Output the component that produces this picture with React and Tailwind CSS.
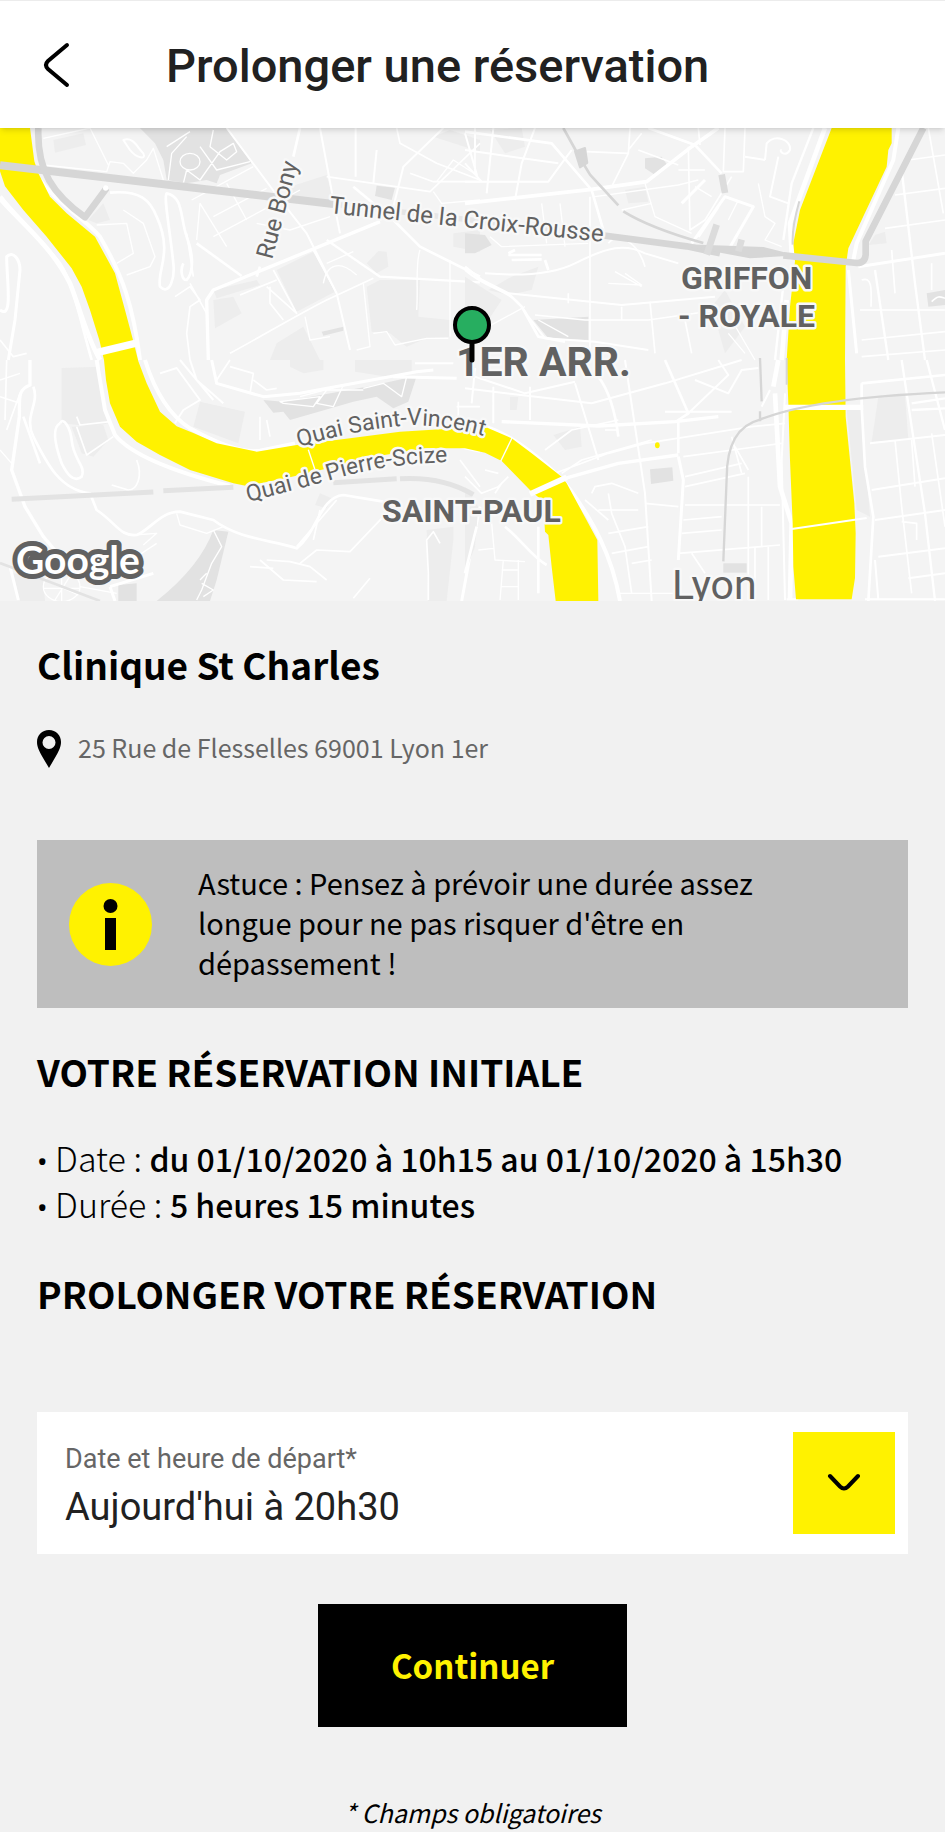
import { useState } from 'react'

const DEPARTURES = ["Aujourd'hui à 20h30", "Aujourd'hui à 21h00", "Aujourd'hui à 21h30"]

export default function App() {
  const [departure, setDeparture] = useState(DEPARTURES[0])

  return (
    <div className="min-h-screen bg-[#f1f1f1] font-['Noto_Sans_CJK_SC',sans-serif] text-black">
      <Header title="Prolonger une réservation" />
      <CityMap />

      <main className="px-[37px] pt-[33px]">
        <h2 className="text-[37px] leading-[60px] font-bold">Clinique St Charles</h2>
        <p className="mt-[33px] flex items-center gap-[17px] text-[25px] leading-[40px] text-[#666]">
          <PinIcon />
          <span className="pb-1">25 Rue de Flesselles 69001 Lyon 1er</span>
        </p>

        {/* Tip */}
        <div className="mt-[69px] flex items-center gap-[46px] bg-[#bebebe] py-[22px] pr-24 pl-8">
          <InfoIcon />
          <p className="pb-1 text-[29px] leading-[40px]">
            Astuce : Pensez à prévoir une durée assez longue pour ne pas risquer d'être en dépassement !
          </p>
        </div>

        {/* Initial booking */}
        <h3 className="mt-[33px] text-[37px] leading-[60px] font-bold">VOTRE RÉSERVATION INITIALE</h3>
        <ul className="mt-[34px] text-[34px] leading-[46px] font-light">
          <BookingLine label="Date" value="du 01/10/2020 à 10h15 au 01/10/2020 à 15h30" />
          <BookingLine label="Durée" value="5 heures 15 minutes" />
        </ul>

        {/* Extension form */}
        <h3 className="mt-9 text-[37px] leading-[60px] font-bold">PROLONGER VOTRE RÉSERVATION</h3>
        <form onSubmit={(e) => e.preventDefault()}>
          <div className="mt-[89px] flex items-center bg-white py-5 pr-[13px] pl-7 font-[Roboto,sans-serif]">
            <div className="flex-1">
              <label htmlFor="departure" className="block text-[27px] leading-[48px] text-[#666]">
                Date et heure de départ*
              </label>
              <select
                id="departure"
                value={departure}
                onChange={(e) => setDeparture(e.target.value)}
                className="block h-12 w-full appearance-none bg-transparent text-[38px] leading-[48px] text-[#212121] focus:outline-none"
              >
                {DEPARTURES.map((d) => <option key={d}>{d}</option>)}
              </select>
            </div>
            <span className="flex size-[102px] items-center justify-center bg-[#fff200]">
              <svg viewBox="0 0 34 20" className="h-5 w-[34px]" fill="none" stroke="#000" strokeWidth="4" strokeLinecap="round">
                <path d="M3 3 L13 13.500 Q17 17.500 21 13.500 L31 3" />
              </svg>
            </span>
          </div>

          <button type="submit" className="mx-auto mt-[50px] block h-[123px] w-[309px] bg-black text-[33px] font-bold text-[#fff200]">
            Continuer
          </button>
        </form>

        <p className="mt-[68px] text-center text-[25px] leading-[34px] italic">* Champs obligatoires</p>
      </main>
    </div>
  )
}

function Header({ title }) {
  return (
    <header className="relative flex h-32 items-center gap-[94px] border-t border-[#ececec] bg-white pl-10 font-[Roboto,sans-serif] shadow-md">
      <button type="button" aria-label="Retour">
        <svg viewBox="0 0 32 48" className="h-12 w-8" fill="none" stroke="#000" strokeWidth="4" strokeLinecap="round">
          <path d="M27 4 L8 20 Q4 24 8 28 L27 44" />
        </svg>
      </button>
      <h1 className="pt-0.5 text-[47px] leading-[60px] font-medium text-[#212121]">{title}</h1>
    </header>
  )
}

function BookingLine({ label, value }) {
  return (
    <li className="h-[46px]">
      <span className="font-['Noto_Sans',sans-serif] text-[28px] font-normal">•</span> {label} :{' '}
      <span className="text-[32px] font-medium">{value}</span>
    </li>
  )
}

function PinIcon() {
  return (
    <svg viewBox="0 0 24 38" className="h-[38px] w-6" aria-hidden="true">
      <path fillRule="evenodd" d="M12 0 C5 0 0 5 0 12 C0 18 3 23 12 38 C21 23 24 18 24 12 C24 5 19 0 12 0 Z M12 6 A6.500 6.500 0 1 1 12 19 A6.500 6.500 0 1 1 12 6 Z" />
    </svg>
  )
}

function InfoIcon() {
  return (
    <svg viewBox="0 0 83 83" className="size-[83px] shrink-0" aria-hidden="true">
      <circle cx="41.500" cy="41.500" r="41.500" fill="#fff200" />
      <circle cx="41.500" cy="23" r="7" />
      <rect x="36" y="35" width="11" height="32" />
    </svg>
  )
}

// Map tiles are drawn at three times their display size.
const TILES = [
  {
    origin: 'translate(0 -24)',
    blocks: [
      'M160 60 L250 40 L258 75 L165 98 Z',
      'M870 200 L980 165 L1000 240 L870 240 Z',
      'M830 450 L940 395 L1005 515 L890 575 Z',
      'M640 540 L700 530 L725 580 L645 625 Z',
      'M1100 500 L1140 480 L1260 480 L1255 590 L1350 600 L1350 650 L1280 655 L1220 680 L1170 640 L1115 635 Z',
      'M830 670 L910 620 L960 720 H810 Z',
      'M1100 430 L1135 393 L1160 395 L1165 440 L1130 460 Z',
      'M1360 340 L1440 330 V395 L1360 380 Z',
      'M1300 50 L1350 30 L1440 60 V95 Z',
      'M640 510 L770 480 L780 495 L650 535 Z',
      'M265 300 L310 250 L330 300 L290 310 Z',
    ],
    parks: [
      'M420 24 H680 L755 130 L660 165 L650 190 L620 180 L560 190 L500 180 L490 120 L465 70 Z',
      'M1130 197 L1185 203 L1175 240 L1125 228 Z',
      'M965 635 L1030 620 V632 L970 647 Z',
    ],
    roads: [
      [14, 'M0 230 C60 310 150 370 210 490 C245 580 260 650 300 720'],
      [12, 'M120 180 C170 250 260 300 300 350 C370 470 400 560 420 720'],
      [8, 'M0 240 C70 320 120 350 180 430 C220 490 240 600 275 720'],
      [10, 'M625 720 L620 540 L640 510 L1140 305'],
      [9, 'M0 570 C40 600 20 480 20 410 C40 390 60 420 60 450 L45 600 L25 720'],
      [8, 'M330 218 C420 210 450 240 470 290 C520 400 470 450 480 500 C510 530 525 470 520 430 C510 330 490 230 500 220 C550 230 540 290 560 350 C590 430 570 470 560 480 C545 480 540 450 550 430'],
      [5, 'M560 340 L580 470'],
      [8, 'M590 370 L725 468'],
      [8, 'M900 24 L880 110 M780 440 L770 470'],
      [6, 'M680 24 L830 225 L920 340 L1010 520 L1050 690'],
      [7, 'M980 360 L1140 470 L1440 487'],
      [8, 'M1060 200 L1180 300 L1260 380 L1440 470'],
      [5, 'M690 700 C800 640 900 580 980 540 L1120 475'],
      [6, 'M960 24 L1000 240 L1020 340'],
      [5, 'M980 170 L1290 215 L1440 70'],
      [6, 'M1067 24 V170 M1130 90 L1120 190'],
      [6, 'M1330 24 L1210 140 L1180 260'],
      [5, 'M1190 24 L1200 70 L1310 130 L1440 180 M1230 160 L1300 185 H1440'],
      [4, 'M1310 185 L1360 120 L1430 165 M1300 215 L1325 250 L1440 240'],
      [4, 'M130 135 L320 155 L330 125 L370 130 L400 160 L440 120 L460 85 L490 180 M130 55 L270 24 L325 135'],
      [6, 'M370 60 C400 50 410 80 430 100 C440 120 410 115 390 90 Z'],
      [4, 'M500 80 L570 35 M505 180 L515 100 L560 50 M550 190 L560 150 L600 180 L660 95 L700 70 L710 95 L680 120 L630 80 L640 30 M540 125 a30 25 0 1 1 60 0 a30 25 0 1 1 -60 0 M600 80 L650 150 L750 125'],
      [4, 'M575 240 L760 140 M640 290 L800 205 M680 190 L740 300 M590 360 L600 250 L680 380 M640 350 L900 210 M770 310 L870 330 L990 290'],
      [5, 'M720 525 L830 480 M800 500 L890 580 L820 450 M810 500 V550 L850 600 M940 390 L1010 520'],
      [4, 'M970 490 C980 430 1020 420 1070 465 M980 430 L1060 395 M915 590 L930 660 L990 650 M1090 490 L1110 680 L1070 690'],
      [4, 'M1120 640 L1160 635 L1185 675 L1280 655 H1345 M1350 420 V650 M1260 390 C1245 430 1255 510 1250 570'],
      [4, 'M290 315 L380 310 L400 400 L350 430 M380 465 L450 440 L465 410 L430 310 L370 270'],
      [5, 'M525 530 L570 500 L600 540 L570 560 L560 640 L570 720 M570 490 L620 580 M0 660 L40 710 L80 700'],
      [5, 'M1420 490 V560 M1425 24 V160'],
    ],
  },
  {
    origin: 'translate(1395 -24)',
    blocks: [
      'M75 30 L170 24 L180 80 L120 100 Z',
      'M480 210 L540 200 L550 245 L490 250 Z',
      'M70 510 L140 470 L220 440 L200 510 L130 525 Z',
      'M740 560 L780 510 L840 620 L780 700 Z',
      'M1230 345 L1260 335 L1265 370 L1210 375 Z',
      'M0 470 L110 540 L70 600 L0 560 Z',
    ],
    parks: [
      'M540 115 L590 110 L610 140 L570 165 L540 145 Z',
      'M205 600 L370 590 V660 L250 655 Z',
      'M0 340 L60 345 L80 375 L30 400 H0 Z',
      'M1385 520 L1440 510 V555 L1390 560 Z',
    ],
    roads: [
      [11, 'M0 250 L380 208 L545 185 L680 80 L760 24'],
      [8, 'M0 35 L260 70 L380 210 L415 330'],
      [6, 'M0 90 L280 130 M0 185 H250 L290 130 L320 90 M65 220 L85 24 M150 240 L170 130 L210 24'],
      [6, 'M30 24 V90 M0 130 L50 185 M0 40 L40 180'],
      [5, 'M365 95 L490 100 L495 24 M490 100 L440 200 M490 90 L530 40 M520 90 L640 135'],
      [8, 'M550 24 L690 75 L770 160'],
      [5, 'M700 24 L705 75 M780 24 L775 155 H835 L840 24 M670 80 L675 330 L720 300 L800 170 M640 150 L720 150'],
      [6, 'M900 120 L905 70 C930 40 980 60 975 90 C960 115 940 90 950 90 M840 110 L900 120 M940 110 L915 230 L970 250'],
      [9, 'M680 370 L780 230 L865 260 L790 390 M700 350 L760 260 M650 250 L720 180'],
      [4, 'M540 190 L570 290 L680 340 M470 270 L560 250 M390 230 L640 195 L700 180 M230 250 L245 370 M285 250 L300 380'],
      [6, 'M0 450 C80 520 140 500 190 590 L240 655 L390 665 L550 690'],
      [8, 'M0 440 L50 480 L130 520 L170 560 L220 650 L300 665'],
      [6, 'M60 460 C180 470 270 460 330 430 C430 380 480 370 540 400 L640 430 M130 520 L470 555 L750 530'],
      [5, 'M210 585 L360 600 L550 600 L760 570 M375 230 V720 M430 370 C460 330 520 370 540 440 M310 520 V550 M470 560 V600 M555 545 L570 700 M660 600 L680 700'],
      [8, 'M130 405 H230 M140 420 L230 418 M130 400 L150 390 M240 420 L250 450'],
      [4, 'M430 490 L530 495 L480 460 M450 455 L530 500 M75 350 L110 380 L370 370 M70 620 L180 560 M220 600 L310 650 M800 600 L870 720 M790 640 L840 700'],
      [14, 'M1080 24 L975 310 L980 400 M965 540 L950 720'],
      [7, 'M1045 24 L980 190 L955 360 M960 450 L930 720'],
      [12, 'M1300 24 L1285 120 L1175 370 L1165 420'],
      [9, 'M1180 440 L1440 400 M1150 450 L1175 700'],
      [5, 'M1330 120 L1440 105 M1290 225 L1440 205 M1260 325 L1440 300 M1190 480 C1220 470 1220 500 1218 560 M1185 570 L1440 570 M1190 660 L1440 635 M1190 710 L1440 690'],
      [7, 'M1310 150 L1350 490 L1380 720 M1230 450 L1270 720'],
      [5, 'M1390 24 L1435 280 M1280 390 L1290 520 M1400 430 V510 M1400 545 C1420 525 1425 530 1440 535'],
      [4, 'M880 190 L900 290 L930 310 L900 360 L950 380 M690 200 L740 230 M820 240 L790 300'],
    ],
  },
  {
    origin: 'translate(0 696)',
    blocks: [
      'M185 24 L300 20 L325 190 L280 200 L185 190 Z',
      'M600 125 L735 155 L715 250 L580 200 Z',
      'M870 0 H970 V30 L910 40 L870 20 Z',
      'M1065 0 H1235 V40 L1160 50 L1065 35 Z',
      'M215 200 L310 195 L325 240 L280 290 L245 280 Z',
      'M1280 510 L1360 500 V540 L1340 723 H1285 Z',
      'M960 400 L995 415 L980 445 L945 435 Z',
      'M40 640 L130 650 L135 723 H60 Z',
    ],
    parks: [
      'M790 120 L850 125 L1100 80 L1250 48 L1225 125 L1180 145 L1130 110 L1060 125 L870 180 L850 155 L820 158 Z',
      'M640 510 L685 515 L650 660 L630 723 H470 Q600 620 640 510 Z',
      'M355 675 L410 670 V723 H355 Z',
    ],
    roads: [
      [12, 'M290 0 L315 150 L345 225 C390 280 500 330 690 378'],
      [12, 'M435 0 C460 80 500 160 570 205 C650 250 730 280 780 272 L885 250'],
      [6, 'M1380 262 L1440 275'],
      [10, 'M90 0 V75 C50 90 60 120 58 170 L35 330 L75 440 L130 530 L190 600'],
      [8, 'M100 80 C120 130 70 170 100 230 C140 310 180 390 270 400 L290 450 C350 490 360 530 410 525 C450 510 480 455 540 455 L640 480 C720 540 820 540 890 565 C950 520 960 410 1030 405 L1150 425'],
      [8, 'M70 170 L120 310 M180 190 C190 170 210 200 215 240 C220 300 260 320 245 350 C220 370 200 340 185 310 C160 240 160 200 180 190'],
      [5, 'M230 170 L240 195 L330 185 M230 200 L260 285 L340 230 M410 300 C430 350 410 390 385 390 L335 375'],
      [9, 'M635 0 L650 70 L790 110 L900 100 L1250 35 L1300 30 M1180 50 L1370 55'],
      [6, 'M540 0 L640 120 M570 0 L590 60 L670 130 M480 40 L530 24 L600 120 L550 150 L525 190'],
      [5, 'M650 60 L690 0 M690 20 L760 40 L750 100 M0 110 L60 130 M20 0 L15 180 M20 210 L60 100'],
      [4, 'M840 125 L960 110 L940 140 L850 130 Z M900 110 L1030 75 L1000 140 L950 130 L980 90 L1090 90 M1090 85 L1150 70 L1205 110 L1220 50'],
      [5, 'M780 170 V240 M800 180 L810 230 M760 60 L800 90 L830 85'],
      [4, 'M470 550 L410 590 M530 460 L540 495 L620 520 L670 500 M400 525 L470 520 L430 555'],
      [4, 'M640 510 L665 560 L635 610 L605 690 L590 720 M605 670 L640 690 L610 710 M600 660 L620 640'],
      [5, 'M890 560 L1010 420 M940 540 L960 450 M800 600 L870 605 L930 620 L980 660 M780 600 L850 660 L950 665 M900 610 L950 570 L1050 575 L1150 470 M750 620 L820 625 M1060 715 L1110 655'],
      [5, 'M1285 720 V640 L1280 540 L1300 515 L1320 550 M1380 300 L1440 380 M1370 140 H1440 M1375 170 V125'],
      [4, 'M130 680 a55 45 0 1 1 110 0 a55 45 0 1 1 -110 0 M135 660 L235 705 M165 720 L215 640 M130 685 H240 M185 635 V723 M240 680 L350 700'],
      [9, 'M1440 440 L1415 560 L1385 723 M30 620 L55 720 M330 680 L345 723 M330 680 L460 640'],
      [4, 'M0 270 L35 310 M0 60 L60 40'],
      [6, 'M1245 10 H1360'],
    ],
  },
  {
    origin: 'translate(1395 696)',
    blocks: [
      'M265 225 L345 200 L350 260 L300 270 Z',
      'M1145 150 L1190 150 L1215 470 L1175 450 Z',
      'M0 380 L40 440 L30 560 L0 640 Z',
      'M1240 110 L1320 105 L1330 240 L1220 245 Z',
      'M135 110 H160 L155 150 H135 Z',
    ],
    parks: [
      'M555 328 L622 322 L625 362 L558 372 Z',
      'M775 610 H845 V638 H775 Z',
    ],
    roads: [
      [12, 'M60 200 C160 230 280 340 320 395 C380 480 440 580 465 723'],
      [10, 'M205 398 L300 355 L460 310 L640 285'],
      [10, 'M110 185 L400 198 L630 185 L760 170'],
      [9, 'M640 290 L655 360 L640 600'],
      [6, 'M0 85 L380 130 L600 70 L830 0 M0 40 L180 100 L330 65 M85 80 V190 M195 80 V180 M330 70 L400 300 M30 24 L20 130'],
      [8, 'M400 50 C430 90 450 150 460 230 M600 0 L670 160 L640 180 V280'],
      [6, 'M760 0 L790 45 L670 160 M690 60 L790 100 L830 30 L880 24 M600 155 L800 155 M480 0 L540 400 L560 723'],
      [5, 'M270 340 L430 280 L540 250 L860 200 L960 190 M240 270 L320 210 L460 180 M290 340 L350 300 L560 240 M420 210 H460'],
      [5, 'M655 290 L950 250 M660 350 L830 310 M660 380 L840 340 M660 435 H945 M655 480 L770 470 M640 580 L945 555 M650 520 L770 510 M380 400 L390 380 L440 370 L520 400'],
      [5, 'M400 450 H520 M430 400 L440 460 L480 560 L500 700 M430 520 L550 500 M440 580 L550 560 M500 610 L560 600 M540 430 L640 440 M360 420 L430 480 M680 580 L720 640'],
      [5, 'M850 350 V720 M870 560 V720 M910 560 V720 M890 440 V560 M800 230 L830 340 M810 260 L850 330'],
      [14, 'M925 80 L940 0 M930 100 L945 380 L980 490 L975 720'],
      [6, 'M960 100 L950 300 L960 720 M915 90 L890 140'],
      [8, 'M1190 70 V140 M1190 140 L1200 320 L1225 470 L1210 723 M1190 70 L1440 45'],
      [6, 'M1240 590 L1440 565 M1220 390 L1440 355 M1215 250 L1440 225 M1230 480 L1440 450 M1330 655 L1440 640 M1230 600 L1240 720'],
      [7, 'M1310 0 L1340 200 L1380 460 L1410 723 M1385 0 L1440 210'],
      [5, 'M1290 240 L1310 440 L1340 700 M1350 380 L1340 240 M1310 485 L1355 490 V540 M1400 220 L1440 500'],
      [7, 'M1340 130 L1440 115 M1340 150 L1440 145'],
      [8, 'M120 500 C170 540 200 590 245 615 M35 500 L0 640 M220 500 V700'],
      [4, 'M80 490 L90 600 L180 605 M115 600 L105 720 M160 600 V720 M40 570 L85 565 M110 630 H160 M110 680 H160'],
      [5, 'M0 350 L50 400 L100 380 L130 350 M90 400 L110 370 M100 340 L60 330'],
      [4, 'M465 700 H640'],
      [6, 'M1200 718 H1440 M965 718 H1000'],
    ],
  },
]

const LEFT_RIVER = 'M0 0 H90 L103 100 L115 136 L150 206 L200 256 L285 326 L345 436 L375 546 L400 640 L415 700 L440 766 L480 851 L530 895 L580 915 L650 946 L770 971 L890 951 L1050 931 L1200 911 L1370 901 L1455 896 L1535 931 L1595 976 L1685 1046 L1700 1066 L1792 1236 L1795 1419 H1667 L1655 1316 L1645 1221 L1635 1211 L1630 1120 L1595 1091 L1505 999 L1455 974 L1395 961 L1280 961 L1120 986 L985 1021 L860 1050 L740 1074 L700 1066 L570 1026 L480 981 L410 941 L360 896 L330 826 L318 756 L312 696 L298 636 L270 546 L245 476 L215 421 L140 326 L70 246 L15 175 L0 130 Z'
const RIGHT_RIVER = 'M2495 0 H2675 V46 L2665 66 L2660 116 L2545 361 L2537 416 L2535 696 L2537 866 L2563 1126 L2567 1216 L2565 1350 L2555 1414 H2388 L2380 1316 L2378 1186 L2370 996 L2365 826 L2360 696 L2370 536 L2385 400 L2380 346 L2400 246 Z'

function CityMap() {
  return (
    <svg
      viewBox="0 0 945 473"
      preserveAspectRatio="xMidYMid slice"
      className="block h-[473px] w-full bg-[#f4f4f4] font-[Roboto,sans-serif]"
      role="img"
      aria-label="Plan de Lyon"
    >
      <defs>
        <path id="quai-vincent" d="M299 319 Q350 303 400 298 Q445 294 510 316" />
        <path id="quai-scize" d="M248 374 Q290 363 328 353 Q390 333 470 334" />
      </defs>

      <g transform="scale(.333333)" fill="none" strokeLinejoin="round">
        {TILES.map((tile) => (
          <g key={tile.origin} transform={tile.origin}>
            {tile.blocks.map((d) => <path key={d} d={d} fill="#ededed" />)}
            {tile.parks.map((d) => <path key={d} d={d} fill="#e2e2e2" />)}
            {tile.roads.map(([w, d]) => <path key={d} d={d} stroke="#fff" strokeWidth={w} />)}
          </g>
        ))}

        {/* Rivers and the bridges over them */}
        <path d={LEFT_RIVER} fill="#fff200" />
        <path d={RIGHT_RIVER} fill="#fff200" />
        <ellipse cx="1972" cy="952" rx="7" ry="9" fill="#fff200" />
        <g stroke="#fff">
          <path d="M290 674 L415 644" strokeWidth="22" />
          <path d="M1590 1098 L1700 1048" strokeWidth="17" />
          <path d="M1502 1000 L1537 928" strokeWidth="4" />
          <path d="M925 965 L945 1025" strokeWidth="4" />
          <path d="M2355 838 H2590" strokeWidth="16" />
          <path d="M2375 1203 L2600 1170" strokeWidth="6" />
        </g>

        {/* Tunnels and railways */}
        <g stroke="#d6d6d6">
          <path d="M0 112 L1000 228" strokeWidth="24" />
          <path d="M115 0 C110 130 160 200 255 268 L320 180" strokeWidth="20" />
          <path d="M1000 228 L1810 322" strokeWidth="16" stroke="#e6e6e6" />
          <path d="M1800 321 L2060 355 L2160 376" strokeWidth="20" />
          <path d="M2060 352 L2290 360 L2370 380 L2250 388 Z" fill="#d6d6d6" strokeWidth="6" />
          <path d="M2350 382 L2570 405 Q2595 405 2597 380 V340 L2770 0" strokeWidth="20" />
          <path d="M1690 0 L1740 90 L1770 140 L1855 232 M1870 250 Q1950 300 2110 345" strokeWidth="8" />
          <path d="M1725 70 L1755 60 L1762 105 L1740 118 Z" fill="#d6d6d6" strokeWidth="6" />
          <path d="M2120 380 L2150 290 M2165 140 L2175 195 M2215 370 L2225 335" strokeWidth="20" stroke="#dcdcdc" />
          <path d="M2170 1300 L2180 1050 Q2180 900 2280 875 Q2440 810 2835 793" strokeWidth="7" />
          <path d="M2280 690 L2285 820 M2280 850 V880" strokeWidth="7" />
          <path d="M2398 220 Q2375 300 2378 350 M2360 690 V770" strokeWidth="6" />
        </g>
        <g stroke="#e3e3e3">
          <path d="M35 1114 L460 1092 M490 1088 L700 1078 M1000 1064 L1190 1052 M1200 1052 Q1330 1045 1420 1100" strokeWidth="15" />
          <path d="M0 1305 L300 1419" strokeWidth="8" />
        </g>
        <circle cx="317" cy="180" r="8" fill="#fff" />
      </g>

      <g fill="#616161" stroke="#f8f8f8" strokeWidth="5" strokeLinejoin="round" paintOrder="stroke">
        <g fontSize="24">
          <text transform="translate(272 132) rotate(-75)">Rue Bony</text>
          <text transform="translate(329 85) rotate(6)">Tunnel de la Croix-Rousse</text>
        </g>
        <g fontSize="23">
          <text><textPath href="#quai-vincent">Quai Saint-Vincent</textPath></text>
          <text><textPath href="#quai-scize">Quai de Pierre-Scize</textPath></text>
        </g>
        <g fontSize="32" fontWeight="700">
          <text x="681" y="161">GRIFFON</text>
          <text x="678" y="199">- ROYALE</text>
          <text x="382" y="394">SAINT-PAUL</text>
        </g>
        <text x="456" y="248" fontSize="41" fontWeight="700">1ER ARR.</text>
        <text x="672" y="471" fontSize="41">Lyon</text>
      </g>

      {/* Marker */}
      <path d="M472 210 V232" stroke="#000" strokeWidth="5" strokeLinecap="round" />
      <circle cx="472" cy="197" r="17" fill="#27ae60" stroke="#000" strokeWidth="4" />

      <text
        x="16" y="446" fontSize="39" fontWeight="700" fill="#fff" stroke="#616161" strokeWidth="10" strokeLinejoin="round" paintOrder="stroke"
        className="font-[Lato,sans-serif]"
      >
        Google
      </text>
    </svg>
  )
}
